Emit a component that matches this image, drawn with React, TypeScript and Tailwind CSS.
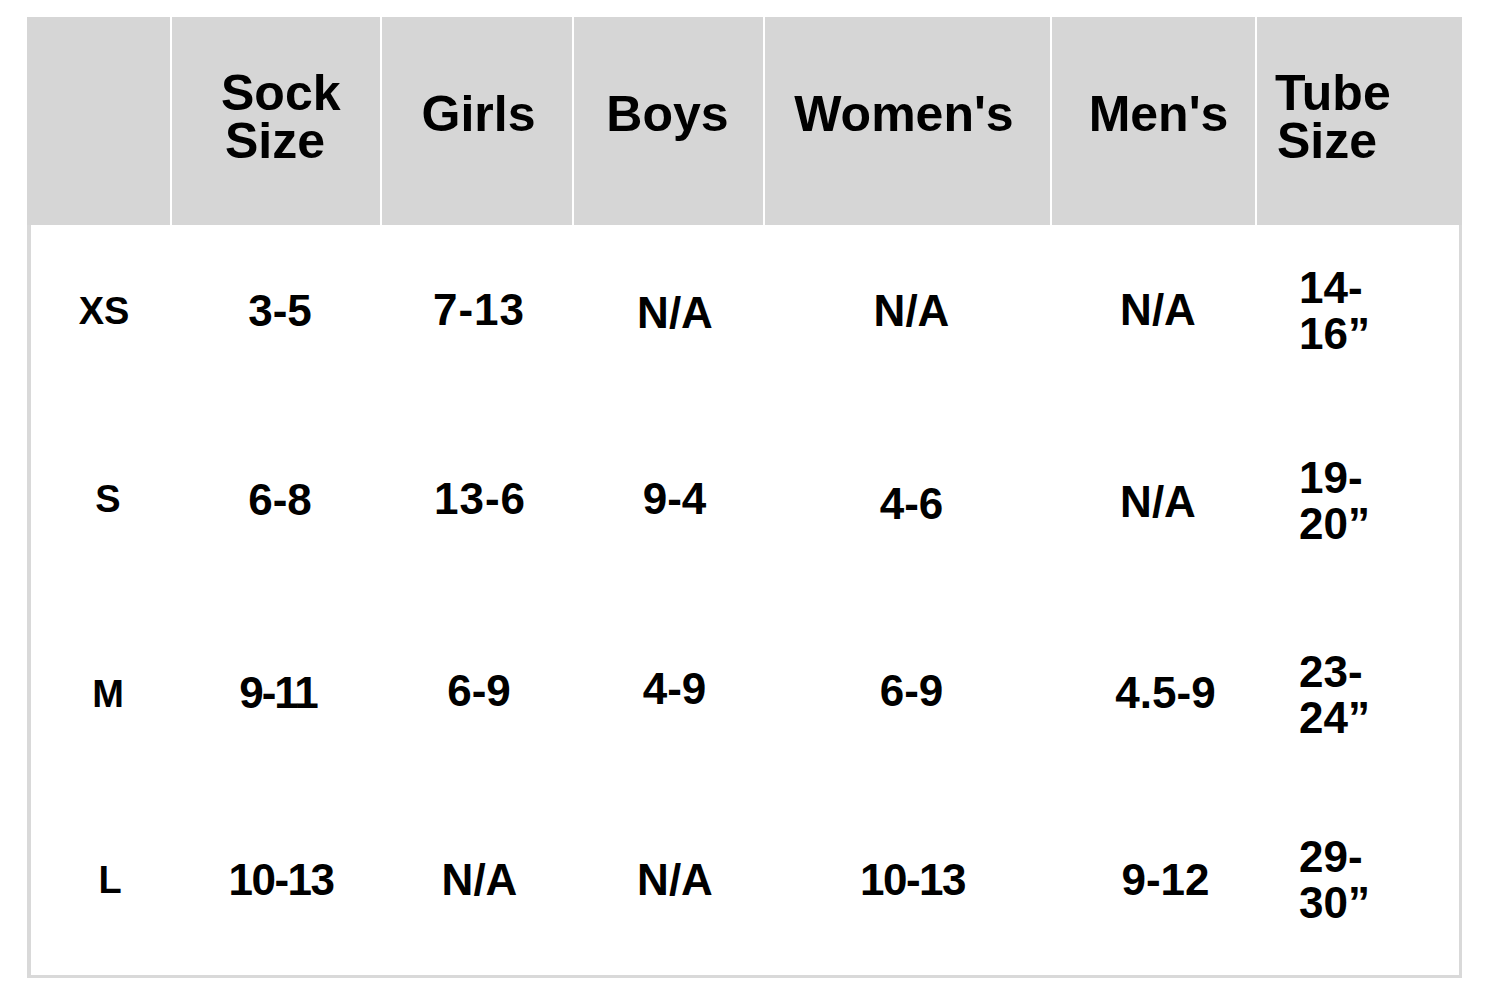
import React from "react";

type Cell = { t: string; c: string };
type Row = { label: Cell; cells: Cell[]; tube: [string, string]; tc: string };

const rows: Row[] = [
  {
    label: { t: "XS", c: "pl-[5px] pb-[16px]" },
    cells: [
      { t: "3-5", c: "pl-[6px] pb-[16px]" },
      { t: "7-13", c: "pl-[2px] pb-[18px] tracking-[1px]" },
      { t: "N/A", c: "pl-[11px] pb-[12px]" },
      { t: "N/A", c: "pl-[6px] pb-[16px]" },
      { t: "N/A", c: "pl-[7px] pb-[18px]" },
    ],
    tube: ["14-", "16\u201d"],
    tc: "pb-[16px]",
  },
  {
    label: { t: "S", c: "pl-[13px] pb-[14px]" },
    cells: [
      { t: "6-8", c: "pl-[6px] pb-[12px]" },
      { t: "13-6", c: "pl-[4px] pb-[14px] tracking-[1px]" },
      { t: "9-4", c: "pl-[10px] pb-[15px]" },
      { t: "4-6", c: "pl-[6px] pb-[4px]" },
      { t: "N/A", c: "pl-[7px] pb-[8px]" },
    ],
    tube: ["19-", "20\u201d"],
    tc: "pb-[10px]",
  },
  {
    label: { t: "M", c: "pl-[13px] pb-[0px]" },
    cells: [
      { t: "9-11", c: "pl-[2px] pb-[2px] tracking-[-2px]" },
      { t: "6-9", c: "pl-[2px] pb-[6px]" },
      { t: "4-9", c: "pl-[10px] pb-[10px]" },
      { t: "6-9", c: "pl-[6px] pb-[6px]" },
      { t: "4.5-9", c: "pl-[22px] pb-[2px]" },
    ],
    tube: ["23-", "24\u201d"],
    tc: "pt-[2px]",
  },
  {
    label: { t: "L", c: "pl-[17px] pb-[2px]" },
    cells: [
      { t: "10-13", c: "pl-[8px] pb-[2px] tracking-[-1.5px]" },
      { t: "N/A", c: "pl-[3px] pb-[2px]" },
      { t: "N/A", c: "pl-[11px] pb-[2px]" },
      { t: "10-13", c: "pl-[8px] pb-[2px] tracking-[-1.5px]" },
      { t: "9-12", c: "pl-[22px] pb-[2px]" },
    ],
    tube: ["29-", "30\u201d"],
    tc: "pb-[2px]",
  },
];

const bodyWidths = ["w-[210px]", "w-[192px]", "w-[191px]", "w-[287px]", "w-[205px]"];

export default function App() {
  return (
    <div className="min-h-screen bg-white font-['Liberation_Sans',Arial,sans-serif] font-bold text-black">
      <div className="pl-[27px] pt-[17px]">
        <div className="w-[1435px]">
          {/* Header */}
          <div className="flex h-[208px] gap-[2px] bg-white">
            <div className="w-[143px] bg-[#d6d6d6]" />
            <div className="flex w-[208px] items-center bg-[#d6d6d6] pl-[49px] pb-[8px] text-[50px] leading-[48px]">
              <div>
                <div>Sock</div>
                <div className="pl-[4px]">Size</div>
              </div>
            </div>
            <div className="flex w-[190px] items-center justify-center bg-[#d6d6d6] pl-[3px] pb-[15px] text-[50px] leading-none">
              Girls
            </div>
            <div className="flex w-[189px] items-center justify-center bg-[#d6d6d6] pr-[2px] pb-[15px] text-[50px] leading-none">
              Boys
            </div>
            <div className="flex w-[285px] items-center justify-center bg-[#d6d6d6] pr-[7px] pb-[15px] text-[50px] leading-none">
              Women's
            </div>
            <div className="flex w-[203px] items-center justify-center bg-[#d6d6d6] pl-[10px] pb-[15px] text-[50px] leading-none">
              Men's
            </div>
            <div className="flex w-[205px] items-center bg-[#d6d6d6] pl-[18px] pb-[8px] text-[50px] leading-[48px]">
              <div>
                <div>Tube</div>
                <div className="pl-[2px]">Size</div>
              </div>
            </div>
          </div>
          {/* Body */}
          <div className="grid h-[753px] grid-rows-4 border-l-[4px] border-r-[3px] border-b-[3px] border-[#d9d9d9] bg-white">
            {rows.map((r, i) => (
              <div key={i} className="flex">
                <div className={`flex w-[141px] items-center justify-center text-[38px] leading-none ${r.label.c}`}>
                  {r.label.t}
                </div>
                {r.cells.map((c, j) => (
                  <div
                    key={j}
                    className={`flex ${bodyWidths[j]} items-center justify-center text-[44px] leading-none ${c.c}`}
                  >
                    {c.t}
                  </div>
                ))}
                <div className={`flex w-[202px] items-center pl-[42px] text-[44px] leading-[46px] ${r.tc}`}>
                  <div>
                    <div>{r.tube[0]}</div>
                    <div>{r.tube[1]}</div>
                  </div>
                </div>
              </div>
            ))}
          </div>
        </div>
      </div>
    </div>
  );
}
